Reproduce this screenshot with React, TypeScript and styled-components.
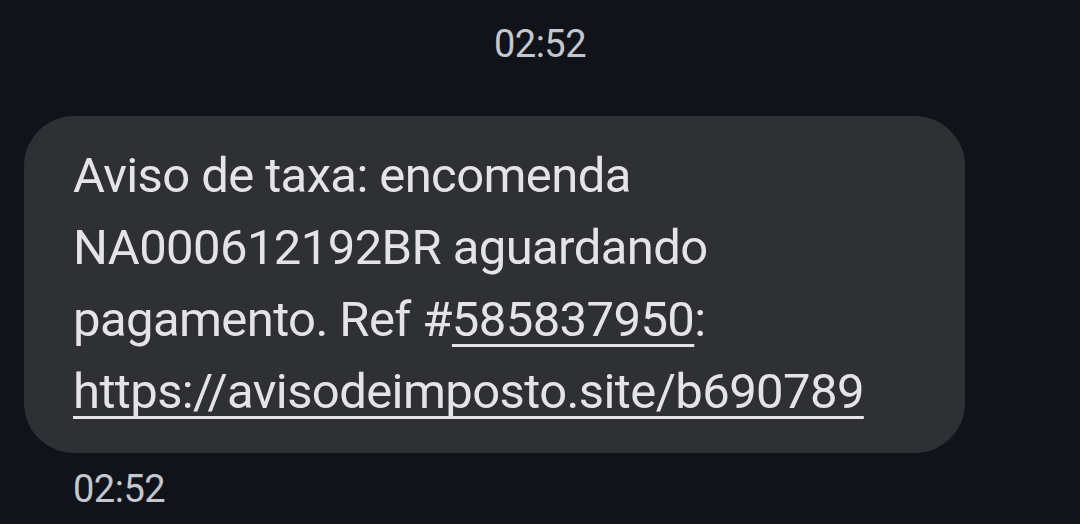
import React from 'react';
import styled, { createGlobalStyle } from 'styled-components';

const GlobalStyle = createGlobalStyle`
  html, body {
    margin: 0;
    padding: 0;
    background-color: #10131a;
  }
  body {
    font-family: Roboto, "Noto Sans", sans-serif;
  }
`;

const StyledScreen = styled.div`
  display: flex;
  flex-direction: column;
  width: 1080px;
  height: 524px;
  overflow: hidden;
  background-color: #10131a;
`;

const StyledStamp = styled.div<{ align: 'center' | 'left' }>`
  font-size: 38px;
  line-height: 48px;
  letter-spacing: -0.5px;
  color: #c4c7ce;
  text-align: ${({ align }) => align};
  padding-left: ${({ align }) => (align === 'left' ? '73px' : '0')};
`;

const StyledHeaderStamp = styled(StyledStamp)`
  padding-top: 20px;
  margin-bottom: 48px;
`;

const StyledFooterStamp = styled(StyledStamp)`
  margin-top: 12px;
`;

const StyledBubble = styled.div`
  box-sizing: border-box;
  width: 941px;
  margin-left: 24px;
  padding: 24px 40px 25px 49px;
  border-radius: 50px;
  background-color: #2f3033;
  color: #e4e4e8;
  font-size: 49px;
  line-height: 72px;
  letter-spacing: -0.6px;
`;

const StyledLink = styled.span`
  text-decoration: underline;
  text-decoration-thickness: 3px;
  text-underline-offset: 8px;
  text-decoration-skip-ink: none;
`;

const App: React.FC = () => (
  <StyledScreen>
    <GlobalStyle />
    <StyledHeaderStamp align="center">02:52</StyledHeaderStamp>
    <StyledBubble>
      Aviso de taxa: encomenda
      <br />
      NA000612192BR aguardando
      <br />
      pagamento. Ref #<StyledLink>585837950</StyledLink>:
      <br />
      <StyledLink>https://avisodeimposto.site/b690789</StyledLink>
    </StyledBubble>
    <StyledFooterStamp align="left">02:52</StyledFooterStamp>
  </StyledScreen>
);

export default App;
